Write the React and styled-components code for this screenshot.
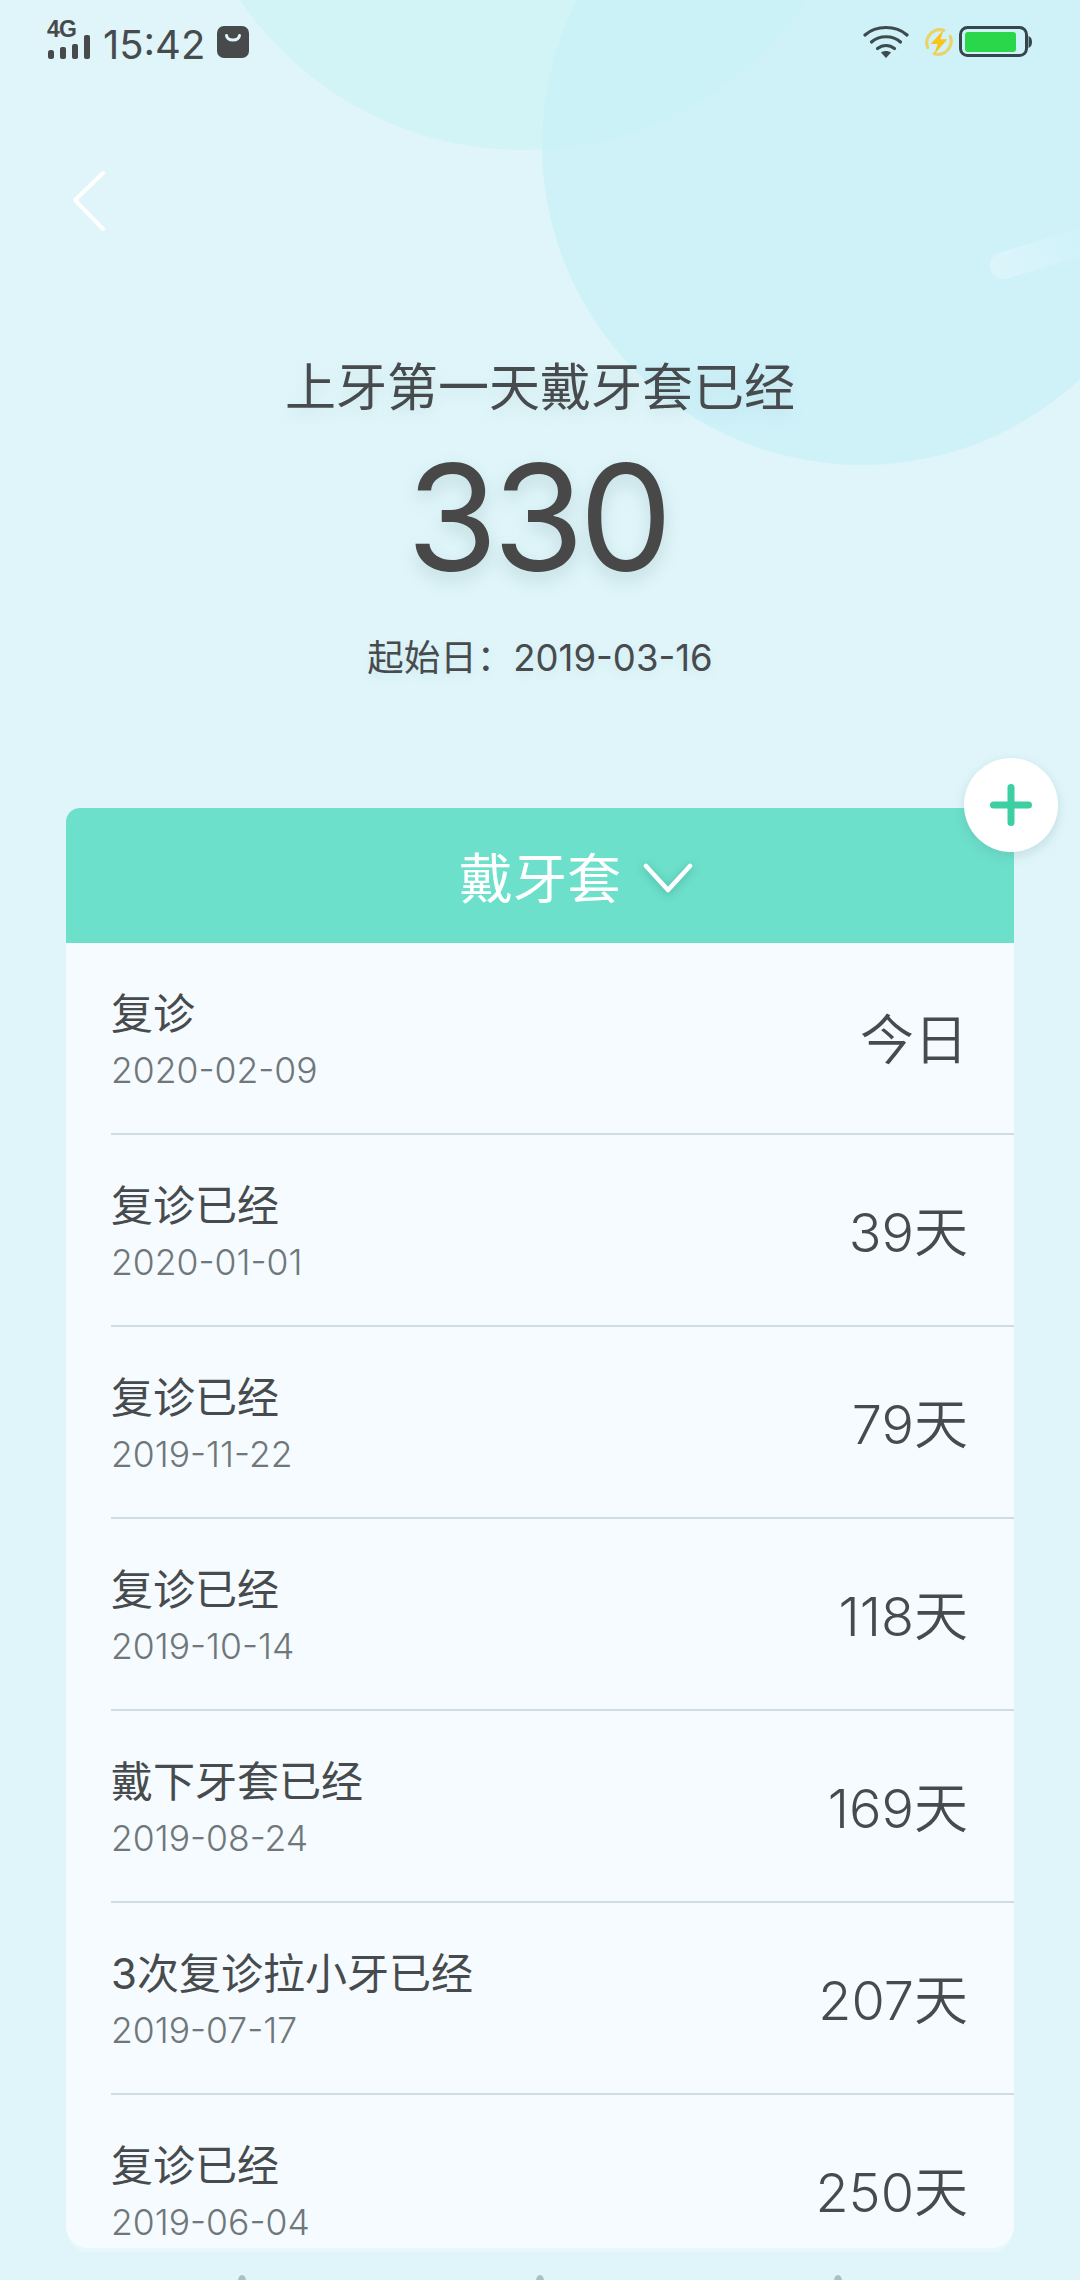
import React from 'react';
import styled, { createGlobalStyle } from 'styled-components';

const Global = createGlobalStyle`
  html, body { margin: 0; padding: 0; background: #dff5f9; }
  * { box-sizing: border-box; }
`;

const FONT = `Inter, "Noto Sans CJK SC", sans-serif`;

const Page = styled.div`
  position: relative;
  width: 1080px;
  height: 2280px;
  overflow: hidden;
  background: #dff5f9;
  font-family: ${FONT};
  color: #474b4d;
`;

const Blob = styled.div`
  position: absolute;
  border-radius: 50%;
  background: ${p => p.$color};
  left: ${p => p.$x - p.$r}px;
  top: ${p => p.$y - p.$r}px;
  width: ${p => p.$r * 2}px;
  height: ${p => p.$r * 2}px;
`;

const Streak = styled.div`
  position: absolute;
  left: 990px;
  top: 252px;
  width: 150px;
  height: 27px;
  border-radius: 14px;
  transform: rotate(-17deg);
  transform-origin: 14px 14px;
  background: linear-gradient(90deg, #dcf5fb, #cff2f9 70%);
`;

const Content = styled.div`
  position: relative;
  display: flex;
  flex-direction: column;
  height: 100%;
  & > * {
    flex-shrink: 0;
  }
`;

const StatusBar = styled.div`
  display: flex;
  justify-content: space-between;
  align-items: center;
  height: 84px;
  padding: 0 48px;
`;

const StatusGroup = styled.div`
  display: flex;
  align-items: center;
  gap: ${p => p.$gap || 0}px;
`;

const Signal = styled.div`
  position: relative;
  width: 42px;
  height: 34px;
`;

const NetLabel = styled.span`
  position: absolute;
  left: -1px;
  top: -8px;
  font: 700 23px/24px "Liberation Sans", sans-serif;
  letter-spacing: -0.8px;
  color: #47494b;
`;

const Time = styled.span`
  font: 400 40px/48px ${FONT};
  color: #474b4d;
  margin-left: 1px;
  padding-top: 5px;
`;

const BackRow = styled.div`
  display: flex;
  height: 272px;
  padding: 85px 0 0 70px;
`;

const Hero = styled.div`
  display: flex;
  flex-direction: column;
  align-items: center;
`;

const HeroTitle = styled.div`
  font-size: 51px;
  line-height: 64px;
  height: 64px;
  color: #474b4d;
  text-shadow: 0 6px 14px rgba(120, 160, 170, 0.18);
`;

const DayCount = styled.div`
  margin-top: 8px;
  padding-right: 6px;
  font-size: 148px;
  font-weight: 400;
  line-height: 180px;
  height: 180px;
  color: #484848;
  letter-spacing: -5px;
  text-shadow: 0 8px 18px rgba(90, 130, 140, 0.22);
`;

const StartDate = styled.div`
  margin-top: 26px;
  font-size: 36.5px;
  line-height: 48px;
  color: #474b4d;
  text-shadow: 0 4px 10px rgba(120, 160, 170, 0.14);
`;

const CardWrap = styled.div`
  position: relative;
  margin: 126px 66px 0;
  height: 1440px;
`;

const Card = styled.div`
  height: 100%;
  overflow: hidden;
  border-radius: 14px 14px 22px 22px;
  background: #f5fbff;
  box-shadow: 0 5px 0 -1px #e6f8fb;
`;

const CardHeader = styled.div`
  display: flex;
  align-items: center;
  justify-content: center;
  gap: 22px;
  height: 135px;
  padding-left: 72px;
  background: #6ce0ca;
  color: #fff;
  font-size: 54px;
`;

const ChevronWrap = styled.span`
  display: flex;
  margin-top: 4px;
  filter: drop-shadow(0 2px 5px rgba(40, 120, 110, 0.45));
`;

const AddButton = styled.div`
  position: absolute;
  right: -44px;
  top: -50px;
  width: 94px;
  height: 94px;
  border-radius: 50%;
  background: #fff;
  box-shadow: 0 4px 12px rgba(80, 130, 140, 0.2);
  display: flex;
  align-items: center;
  justify-content: center;
`;

const Row = styled.div`
  display: flex;
  justify-content: space-between;
  align-items: center;
  height: 192px;
  margin-left: 45px;
  padding-right: 46px;
  border-bottom: 2px solid #cfdde0;
`;

const RowInfo = styled.div`
  display: flex;
  flex-direction: column;
  padding-top: 4px;
`;

const RowTitle = styled.div`
  font-size: 42px;
  line-height: 54px;
  color: #474b4d;
`;

const RowDate = styled.div`
  margin-top: 7px;
  font-size: 35.5px;
  font-weight: 350;
  line-height: 46px;
  color: #70777a;
`;

const RowDays = styled.div`
  padding-top: 6px;
  font-size: 54px;
  font-weight: 350;
  line-height: 66px;
  color: #474b4d;
`;

const Pager = styled.div`
  display: flex;
  justify-content: center;
  gap: 290px;
  margin-top: 27px;
`;

const PagerDot = styled.div`
  width: 8px;
  height: 12px;
  border-radius: 50%;
  background: #aebfc4;
`;

const rows = [
  ['复诊', '2020-02-09', '今日'],
  ['复诊已经', '2020-01-01', '39天'],
  ['复诊已经', '2019-11-22', '79天'],
  ['复诊已经', '2019-10-14', '118天'],
  ['戴下牙套已经', '2019-08-24', '169天'],
  ['3次复诊拉小牙已经', '2019-07-17', '207天'],
  ['复诊已经', '2019-06-04', '250天'],
];

const SignalBars = () => (
  <svg width="42" height="34" viewBox="0 0 42 34" style={{ display: 'block' }}>
    <g fill="#47494b">
      <rect x="0" y="25" width="6" height="9" rx="2.5" />
      <rect x="12" y="22" width="6" height="12" rx="2" />
      <rect x="24" y="19" width="6" height="15" rx="2" />
      <rect x="36" y="10" width="6" height="24" rx="2" />
    </g>
  </svg>
);

const BagIcon = () => (
  <svg width="32" height="32" viewBox="0 0 32 32">
    <rect width="32" height="32" rx="7" fill="#47494b" />
    <path d="M9.5 9.5 C10.5 15.5 21.5 15.5 22.5 9.5" fill="none" stroke="#dff5f9" strokeWidth="3" strokeLinecap="round" />
  </svg>
);

const WifiIcon = () => (
  <svg width="46" height="34" viewBox="0 0 46 34" fill="none" stroke="#3f4a4f" strokeWidth="3.2">
    <path d="M2 10 C13 0 33 0 44 10" strokeLinecap="round" />
    <path d="M8.5 17 C16 10 30 10 37.5 17" strokeLinecap="round" />
    <path d="M14.5 23.5 C19.5 19.5 26.5 19.5 31.5 23.5" strokeLinecap="round" />
    <path d="M18 27.5 C21 25.5 25 25.5 28 27.5 L23 33 Z" fill="#3f4a4f" stroke="none" />
  </svg>
);

const BoltIcon = () => (
  <svg width="30" height="32" viewBox="0 0 32 32">
    <path d="M21 3.5 A 14 14 0 0 0 4 22 M11 28.5 A 14 14 0 0 0 28 10" fill="none" stroke="#ead469" strokeWidth="3.4" strokeLinecap="round" />
    <path d="M21 3 L7 18 L14.5 18 L11 29 L25 13 L17.5 13 Z" fill="#fbc31e" />
  </svg>
);

const BatteryIcon = () => (
  <svg width="73" height="32" viewBox="0 0 73 32">
    <rect x="1.5" y="1.5" width="66" height="28" rx="7" fill="none" stroke="#36464d" strokeWidth="3" />
    <rect x="6" y="6" width="51" height="20" rx="3" fill="#2bd74a" />
    <path d="M69.5 10 C72 11 73 13 73 16 C73 19 72 21 69.5 22 Z" fill="#36464d" />
  </svg>
);

const BackIcon = () => (
  <svg width="36" height="64" viewBox="0 0 36 64" fill="none" stroke="#fff" strokeWidth="4" strokeLinecap="round" strokeLinejoin="round">
    <path d="M33 4 L5 31 L33 60" />
  </svg>
);

const ChevronIcon = () => (
  <svg width="50" height="32" viewBox="0 0 50 32" fill="none" stroke="#fff" strokeWidth="4.5" strokeLinecap="round" strokeLinejoin="round">
    <path d="M3 4 L25 28 L47 4" />
  </svg>
);

const PlusIcon = () => (
  <svg width="42" height="42" viewBox="0 0 42 42" fill="none" stroke="#3ccfa2" strokeWidth="7" strokeLinecap="round">
    <path d="M21 3.5 V38.5 M3.5 21 H38.5" />
  </svg>
);

export default function App() {
  return (
    <>
      <Global />
      <Page>
        <Blob $x={862} $y={145} $r={320} $color="#cff2f9" />
        <Blob $x={523} $y={-192} $r={342} $color="rgba(200, 243, 245, 0.5)" />
        <Streak />
        <Content>
          <StatusBar>
            <StatusGroup $gap={12}>
              <Signal>
                <NetLabel>4G</NetLabel>
                <SignalBars />
              </Signal>
              <Time>15:42</Time>
              <BagIcon />
            </StatusGroup>
            <StatusGroup $gap={15}>
              <WifiIcon />
              <StatusGroup $gap={5}>
                <BoltIcon />
                <BatteryIcon />
              </StatusGroup>
            </StatusGroup>
          </StatusBar>
          <BackRow>
            <BackIcon />
          </BackRow>
          <Hero>
            <HeroTitle>上牙第一天戴牙套已经</HeroTitle>
            <DayCount>330</DayCount>
            <StartDate>起始日：2019-03-16</StartDate>
          </Hero>
          <CardWrap>
            <Card>
              <CardHeader>
                戴牙套
                <ChevronWrap>
                  <ChevronIcon />
                </ChevronWrap>
              </CardHeader>
              {rows.map(([title, date, days]) => (
                <Row key={date}>
                  <RowInfo>
                    <RowTitle>{title}</RowTitle>
                    <RowDate>{date}</RowDate>
                  </RowInfo>
                  <RowDays>{days}</RowDays>
                </Row>
              ))}
            </Card>
            <AddButton>
              <PlusIcon />
            </AddButton>
          </CardWrap>
          <Pager>
            <PagerDot />
            <PagerDot />
            <PagerDot />
          </Pager>
        </Content>
      </Page>
    </>
  );
}
